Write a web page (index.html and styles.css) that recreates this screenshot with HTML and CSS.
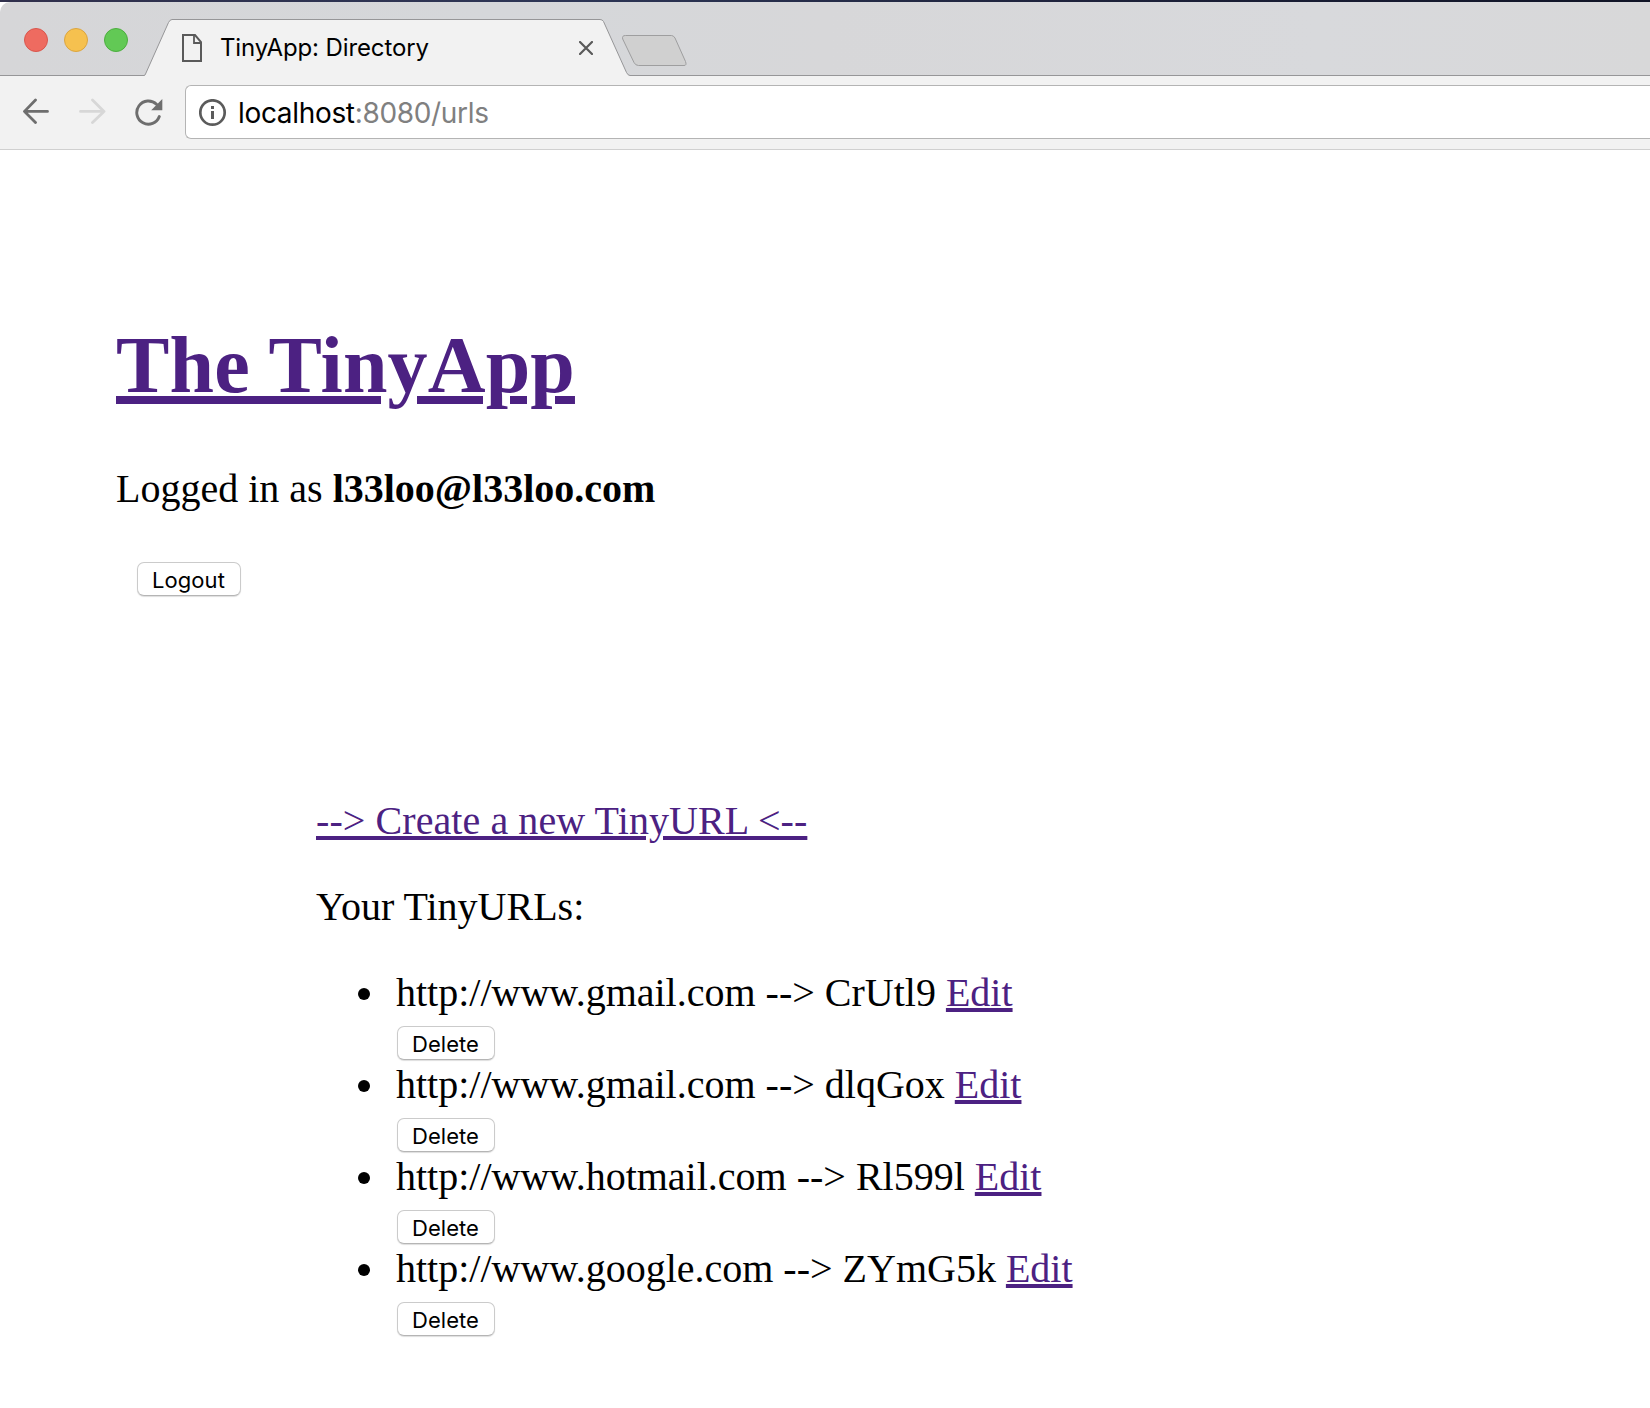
FILE: index.html
```html
<!DOCTYPE html>
<html lang="en">
<head>
<meta charset="utf-8">
<title>TinyApp: Directory</title>
<link rel="stylesheet" href="styles.css">
</head>
<body>
<div class="desktop-edge"></div>
<header class="tab-strip">
  <div class="lights"><span class="light red"></span><span class="light yellow"></span><span class="light green"></span></div>
  <div class="tab">
    <svg class="tab-shape" width="486" height="57" viewBox="0 0 486 57"><path d="M0 57V56.5Q1 56.500 1.500 55L24.500 3.500Q26 .5 28 .5H456Q458.500 .5 459.500 2.500L482.500 53.500Q484 56.500 486 56.500V57Z" fill="#f2f2f2"/><path d="M0 56.500Q1 56.500 1.500 55L24.500 3.500Q26 .5 28 .5H456Q458.500 .5 459.500 2.500L482.500 53.500Q484 56.500 486 56.500" fill="none" stroke="#969698"/></svg>
    <svg class="page-icon" width="20" height="28" viewBox="0 0 20 28" fill="none" stroke="#5a5a5a" stroke-width="2"><path d="M1 1H13L19 8V27H1Z"/><path d="M12 1V9H19" stroke-width="1.800"/></svg>
    <span class="tab-title">TinyApp: Directory</span>
    <svg class="tab-close" width="14" height="14" viewBox="0 0 14 14" stroke="#5a5a5a" stroke-width="2.200" stroke-linecap="round"><path d="M1 1L13 13M13 1L1 13"/></svg>
  </div>
  <svg class="new-tab" width="66" height="33" viewBox="0 0 66 33"><path d="M4.500 1.500H50.500Q52.500 1.500 54 4L64.500 27.500Q66 31.500 63 31.500H17.500Q14.500 31.500 13 28.500L1.700 5Q.7 1.500 4.500 1.500Z" fill="#d0d0d0" stroke="#9e9e9f"/></svg>
</header>
<nav class="toolbar">
  <svg class="back" width="28" height="26" viewBox="0 0 28 26" fill="none" stroke="#6e6e6e" stroke-width="2.800" stroke-linecap="round"><path d="M2.500 13.400H25.500M13.500 2L2.500 13.400L13.500 24.500" stroke-linejoin="round"/></svg>
  <svg class="forward" width="28" height="26" viewBox="0 0 28 26" fill="none" stroke="#d7d7d7" stroke-width="2.800" stroke-linecap="round"><path d="M2.500 13.400H26M14.500 2L26 13.400L14.500 24.500" stroke-linejoin="round"/></svg>
  <svg class="reload" width="28" height="28" viewBox="0 0 28 28"><path d="M21.500 6.300A11.600 11.600 0 1 0 24.300 18.500" fill="none" stroke="#6e6e6e" stroke-width="2.900" stroke-linecap="round"/><path d="M27.300 1V12.200H16.200Z" fill="#6e6e6e"/></svg>
  <div class="address">
    <svg class="info" width="28" height="28" viewBox="0 0 28 28"><circle cx="13.500" cy="13.500" r="12.200" fill="none" stroke="#5b5b5b" stroke-width="2.700"/><path d="M12 7H15V10H12ZM12 12H15V20H12Z" fill="#5b5b5b"/></svg>
    <span class="url">localhost<span class="url-path">:8080/urls</span></span>
  </div>
</nav>
<main class="page">
  <h1><a href="#">The TinyApp</a></h1>
  <p>Logged in as <b>l33loo@l33loo.com</b></p>
  <form class="logout"><button type="button" class="logout-button">Logout</button></form>
  <section class="directory">
    <p><a href="#" class="create">--&gt; Create a new TinyURL &lt;--</a></p>
    <p>Your TinyURLs:</p>
    <ul>
      <li>http://www.gmail.com --&gt; CrUtl9 <a href="#">Edit</a><form><button type="button">Delete</button></form></li>
      <li>http://www.gmail.com --&gt; dlqGox <a href="#">Edit</a><form><button type="button">Delete</button></form></li>
      <li>http://www.hotmail.com --&gt; Rl599l <a href="#">Edit</a><form><button type="button">Delete</button></form></li>
      <li>http://www.google.com --&gt; ZYmG5k <a href="#">Edit</a><form><button type="button">Delete</button></form></li>
    </ul>
  </section>
</main>
</body>
</html>
```
FILE: styles.css
```css
* { box-sizing: border-box; }
body { margin: 0; height: 1408px; overflow: hidden; background: #fff; color: #000; }
svg { display: block; flex: none; }

/* Browser window */
.desktop-edge { height: 2px; background: linear-gradient(90deg, #30304c, #2c3555 35%, #1c2038 70%, #101426); }
.tab-strip { display: flex; height: 74px; border-top-left-radius: 10px; border-bottom: 1px solid #969698; background: linear-gradient(90deg, #d6d6d8, #d5d7da 30%, #d7d7d9 50%, #d8d9dc 80%, #d8d8d9); }
.lights { display: flex; gap: 16px; width: 144px; padding: 26px 0 0 24px; }
.light { width: 24px; height: 24px; border-radius: 50%; border: 1px solid; }
.red { background: #ee6b60; border-color: #d9564d; }
.yellow { background: #f6c14f; border-color: #dba540; }
.green { background: #62c955; border-color: #4cae3e; }
.tab { position: relative; display: flex; width: 486px; height: 57px; margin-top: 17px; }
.tab-shape { position: absolute; inset: 0; z-index: -1; }
.tab-strip, .tab { isolation: isolate; }
.page-icon { margin: 15px 0 0 38px; }
.tab-title { width: 341px; margin: 14px 0 0 18px; font: 24px/30px Inter, sans-serif; letter-spacing: -0.12px; white-space: nowrap; }
.tab-close { margin: 22px 0 0 18px; }
.new-tab { margin: 32px 0 0 -9px; }
.toolbar { display: flex; height: 74px; border-bottom: 1px solid #d0d0d0; background: #f2f2f2; }
.back { margin: 22px 0 0 22px; }
.forward { margin: 22px 0 0 28px; }
.reload { margin: 22px 0 0 29px; }
.address { display: flex; flex: 1; height: 54px; margin: 9px 0 0 22px; padding-left: 13px; border: 1px solid #b4b4b4; border-right: 0; border-radius: 6px 0 0 6px; background: #fff; }
.info { margin-top: 13px; }
.url { margin: 9px 0 0 11px; font: 28px/36px Inter, sans-serif; letter-spacing: -0.33px; }
.url-path { color: #808080; }

/* Directory page */
.page { padding: 169px 0 0 116px; font: 40px/46px "Liberation Serif", serif; }
h1 { margin: 0 0 55px; font-size: 80px; line-height: 92px; letter-spacing: 0.15px; }
p { margin: 0 0 40px; }
a { color: #4c2182; text-decoration: underline; text-decoration-thickness: 4px; text-underline-offset: 2px; }
h1 a { text-decoration-thickness: 8px; text-underline-offset: 4px; }
.create { letter-spacing: 0.08px; }
button { display: block; width: 98px; height: 34px; margin: 0 0 0 1px; padding: 2px 1px 0 0; border: 1px solid #cbcbcb; border-bottom-color: #b5b5b5; border-radius: 7px; background: #fff; box-shadow: 0 1px 1px #0002; color: #000; font: 22px/30px Inter, sans-serif; letter-spacing: 0.05px; }
.logout { height: 34px; margin-top: 50px; padding-left: 20px; }
.logout-button { width: 104px; }
.directory { margin: 202px 0 0 200px; }
ul { margin: 0; padding-left: 80px; list-style: none; }
li { height: 92px; }
li::before { content: ""; display: inline-block; width: 12px; height: 12px; margin: 0 26px 0 -38px; border-radius: 50%; background: #000; vertical-align: 6px; }
li form { padding-top: 10px; }
```
